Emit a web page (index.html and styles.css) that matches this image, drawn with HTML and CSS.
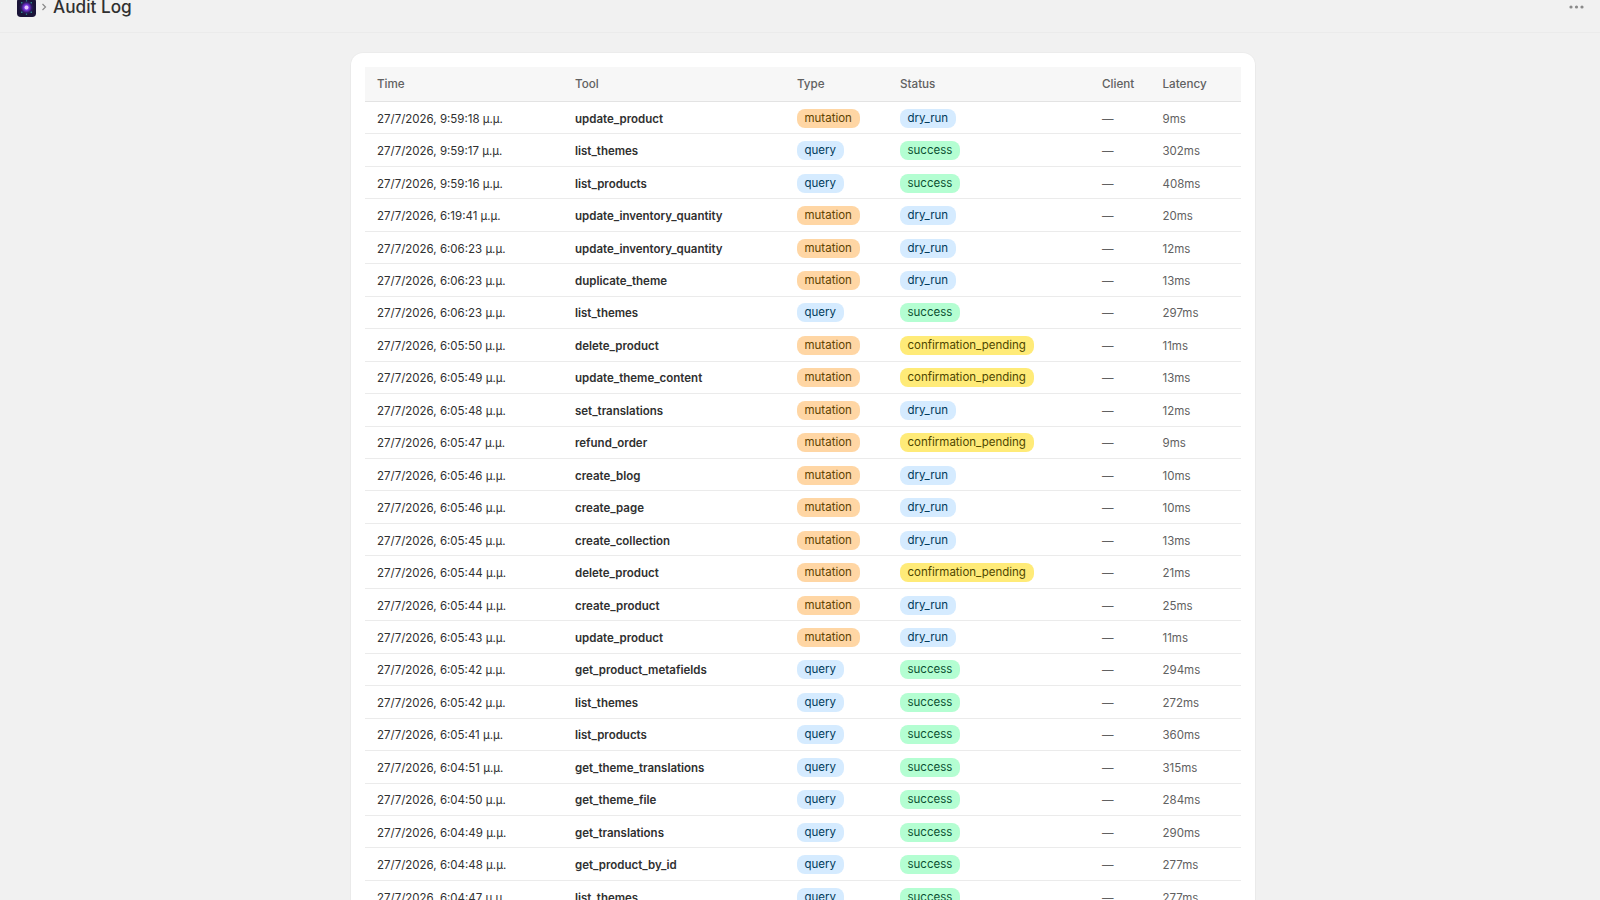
FILE: index.html
```html
<!DOCTYPE html>
<html lang="en">
<head>
  <meta charset="UTF-8">
  <title>Audit Log</title>
  <link rel="stylesheet" href="styles.css">
</head>
<body>
  <!-- page is scrolled a little in the reference, so the bar starts above the fold -->
  <header class="topbar">
    <div class="crumbs">
      <svg class="app-icon" width="19" height="19" viewBox="0 0 20 20">
        <defs>
          <radialGradient id="glow">
            <stop offset="0" stop-color="#d9a6ff"/>
            <stop offset="0.35" stop-color="#7a35e0"/>
            <stop offset="0.7" stop-color="#2c1a5e"/>
            <stop offset="1" stop-color="#1a1438"/>
          </radialGradient>
        </defs>
        <rect width="20" height="20" rx="4" fill="#1a1438"/>
        <circle cx="10" cy="10" r="8" fill="url(#glow)"/>
        <circle cx="10" cy="10" r="2" fill="#e6c8ff"/>
        <g fill="#2fa39a">
          <circle cx="5" cy="5" r="0.8"/>
          <circle cx="15" cy="5" r="0.8"/>
          <circle cx="5" cy="15" r="0.8"/>
          <circle cx="15" cy="15" r="0.8"/>
          <circle cx="10" cy="3" r="0.7"/>
          <circle cx="10" cy="17" r="0.7"/>
        </g>
      </svg>
      <svg class="chevron" width="8" height="10" viewBox="0 0 8 10">
        <path d="M2.5 2l3 3-3 3" fill="none" stroke="#8a8a8a" stroke-width="1.2"/>
      </svg>
      <h1>Audit Log</h1>
    </div>
    <svg class="more" width="16" height="4" viewBox="0 0 16 4">
      <circle cx="2" cy="2" r="1.6"/>
      <circle cx="7.5" cy="2" r="1.6"/>
      <circle cx="13" cy="2" r="1.6"/>
    </svg>
  </header>

  <main class="content">
    <div class="card">
      <table class="log">
        <thead>
          <tr>
            <th class="col-time">Time</th>
            <th class="col-tool">Tool</th>
            <th class="col-type">Type</th>
            <th class="col-status">Status</th>
            <th class="col-client">Client</th>
            <th class="col-latency">Latency</th>
          </tr>
        </thead>
        <tbody>
          <tr><td>27/7/2026, 9:59:18 μ.μ.</td><td class="tool">update_product</td><td><span class="badge orange">mutation</span></td><td><span class="badge blue">dry_run</span></td><td class="dim">—</td><td class="dim">9ms</td></tr>
          <tr><td>27/7/2026, 9:59:17 μ.μ.</td><td class="tool">list_themes</td><td><span class="badge blue">query</span></td><td><span class="badge green">success</span></td><td class="dim">—</td><td class="dim">302ms</td></tr>
          <tr><td>27/7/2026, 9:59:16 μ.μ.</td><td class="tool">list_products</td><td><span class="badge blue">query</span></td><td><span class="badge green">success</span></td><td class="dim">—</td><td class="dim">408ms</td></tr>
          <tr><td>27/7/2026, 6:19:41 μ.μ.</td><td class="tool">update_inventory_quantity</td><td><span class="badge orange">mutation</span></td><td><span class="badge blue">dry_run</span></td><td class="dim">—</td><td class="dim">20ms</td></tr>
          <tr><td>27/7/2026, 6:06:23 μ.μ.</td><td class="tool">update_inventory_quantity</td><td><span class="badge orange">mutation</span></td><td><span class="badge blue">dry_run</span></td><td class="dim">—</td><td class="dim">12ms</td></tr>
          <tr><td>27/7/2026, 6:06:23 μ.μ.</td><td class="tool">duplicate_theme</td><td><span class="badge orange">mutation</span></td><td><span class="badge blue">dry_run</span></td><td class="dim">—</td><td class="dim">13ms</td></tr>
          <tr><td>27/7/2026, 6:06:23 μ.μ.</td><td class="tool">list_themes</td><td><span class="badge blue">query</span></td><td><span class="badge green">success</span></td><td class="dim">—</td><td class="dim">297ms</td></tr>
          <tr><td>27/7/2026, 6:05:50 μ.μ.</td><td class="tool">delete_product</td><td><span class="badge orange">mutation</span></td><td><span class="badge yellow">confirmation_pending</span></td><td class="dim">—</td><td class="dim">11ms</td></tr>
          <tr><td>27/7/2026, 6:05:49 μ.μ.</td><td class="tool">update_theme_content</td><td><span class="badge orange">mutation</span></td><td><span class="badge yellow">confirmation_pending</span></td><td class="dim">—</td><td class="dim">13ms</td></tr>
          <tr><td>27/7/2026, 6:05:48 μ.μ.</td><td class="tool">set_translations</td><td><span class="badge orange">mutation</span></td><td><span class="badge blue">dry_run</span></td><td class="dim">—</td><td class="dim">12ms</td></tr>
          <tr><td>27/7/2026, 6:05:47 μ.μ.</td><td class="tool">refund_order</td><td><span class="badge orange">mutation</span></td><td><span class="badge yellow">confirmation_pending</span></td><td class="dim">—</td><td class="dim">9ms</td></tr>
          <tr><td>27/7/2026, 6:05:46 μ.μ.</td><td class="tool">create_blog</td><td><span class="badge orange">mutation</span></td><td><span class="badge blue">dry_run</span></td><td class="dim">—</td><td class="dim">10ms</td></tr>
          <tr><td>27/7/2026, 6:05:46 μ.μ.</td><td class="tool">create_page</td><td><span class="badge orange">mutation</span></td><td><span class="badge blue">dry_run</span></td><td class="dim">—</td><td class="dim">10ms</td></tr>
          <tr><td>27/7/2026, 6:05:45 μ.μ.</td><td class="tool">create_collection</td><td><span class="badge orange">mutation</span></td><td><span class="badge blue">dry_run</span></td><td class="dim">—</td><td class="dim">13ms</td></tr>
          <tr><td>27/7/2026, 6:05:44 μ.μ.</td><td class="tool">delete_product</td><td><span class="badge orange">mutation</span></td><td><span class="badge yellow">confirmation_pending</span></td><td class="dim">—</td><td class="dim">21ms</td></tr>
          <tr><td>27/7/2026, 6:05:44 μ.μ.</td><td class="tool">create_product</td><td><span class="badge orange">mutation</span></td><td><span class="badge blue">dry_run</span></td><td class="dim">—</td><td class="dim">25ms</td></tr>
          <tr><td>27/7/2026, 6:05:43 μ.μ.</td><td class="tool">update_product</td><td><span class="badge orange">mutation</span></td><td><span class="badge blue">dry_run</span></td><td class="dim">—</td><td class="dim">11ms</td></tr>
          <tr><td>27/7/2026, 6:05:42 μ.μ.</td><td class="tool">get_product_metafields</td><td><span class="badge blue">query</span></td><td><span class="badge green">success</span></td><td class="dim">—</td><td class="dim">294ms</td></tr>
          <tr><td>27/7/2026, 6:05:42 μ.μ.</td><td class="tool">list_themes</td><td><span class="badge blue">query</span></td><td><span class="badge green">success</span></td><td class="dim">—</td><td class="dim">272ms</td></tr>
          <tr><td>27/7/2026, 6:05:41 μ.μ.</td><td class="tool">list_products</td><td><span class="badge blue">query</span></td><td><span class="badge green">success</span></td><td class="dim">—</td><td class="dim">360ms</td></tr>
          <tr><td>27/7/2026, 6:04:51 μ.μ.</td><td class="tool">get_theme_translations</td><td><span class="badge blue">query</span></td><td><span class="badge green">success</span></td><td class="dim">—</td><td class="dim">315ms</td></tr>
          <tr><td>27/7/2026, 6:04:50 μ.μ.</td><td class="tool">get_theme_file</td><td><span class="badge blue">query</span></td><td><span class="badge green">success</span></td><td class="dim">—</td><td class="dim">284ms</td></tr>
          <tr><td>27/7/2026, 6:04:49 μ.μ.</td><td class="tool">get_translations</td><td><span class="badge blue">query</span></td><td><span class="badge green">success</span></td><td class="dim">—</td><td class="dim">290ms</td></tr>
          <tr><td>27/7/2026, 6:04:48 μ.μ.</td><td class="tool">get_product_by_id</td><td><span class="badge blue">query</span></td><td><span class="badge green">success</span></td><td class="dim">—</td><td class="dim">277ms</td></tr>
          <tr><td>27/7/2026, 6:04:47 μ.μ.</td><td class="tool">list_themes</td><td><span class="badge blue">query</span></td><td><span class="badge green">success</span></td><td class="dim">—</td><td class="dim">277ms</td></tr>
        </tbody>
      </table>
    </div>
  </main>
</body>
</html>
```

FILE: styles.css
```css
:root {
  --bg: #f1f1f1;
  --text: #303030;
  --text-dim: #616161;
  --line: #ebebeb;
}

html, body {
  height: 100%;
  overflow: hidden;
}

body {
  margin: 0;
  background-color: var(--bg);
  color: var(--text);
  font-family: Inter, "Liberation Sans", sans-serif;
  font-size: 13px;
}

/* Top bar */
.topbar {
  display: flex;
  align-items: center;
  justify-content: space-between;
  height: 50px;
  margin-top: -18px;
  padding: 0 15px 0 17px;
  border-bottom: 1px solid #ebebeb;
}

.crumbs {
  display: flex;
  align-items: center;
  gap: 4px;
}

.app-icon {
  display: block;
}

.topbar h1 {
  margin: 0 0 0 1px;
  font-size: 17.2px;
  font-weight: 550;
  line-height: 24px;
}

.more {
  fill: #8a8a8a;
}

/* Card */
.content {
  display: flex;
  justify-content: center;
  padding: 20px 0 0 6px;
}

.card {
  width: 876px;
  padding: 14px;
  background-color: #fff;
  border-radius: 12px;
  box-shadow: 0 0 0 1px rgba(0, 0, 0, 0.02), 0 1px 1px rgba(0, 0, 0, 0.08);
}

/* Table */
.log {
  width: 100%;
  table-layout: fixed;
  border-collapse: collapse;
}

.log th,
.log td {
  padding: 7.75px 12px 4.25px;
  text-align: left;
  white-space: nowrap;
  line-height: 19.45px;
}

.log th {
  height: 34.5px;
  box-sizing: border-box;
  padding: 7px 12px 5px;
  background-color: #f7f7f7;
  border-bottom: 1px solid #e3e3e3;
  color: var(--text-dim);
  font-weight: 500;
  font-size: 11.65px;
}

.log td {
  border-bottom: 1px solid var(--line);
  font-size: 11.5px;
}

.col-time { width: 198px; }
.col-tool { width: 222px; }
.col-type { width: 103px; }
.col-status { width: 202px; }
.col-client { width: 60.5px; }

.tool {
  font-weight: 600;
}

.dim {
  color: var(--text-dim);
}

/* Badges */
.badge {
  display: inline-block;
  margin-top: -1px;
  padding: 0 8px 0 7.5px;
  border-radius: 8px;
  font-size: 11.5px;
  font-weight: 400;
  line-height: 19px;
  vertical-align: top;
}

.orange { background-color: #ffd6a4; color: #5e4200; }
.blue { background-color: #d5ebff; color: #003a5a; }
.green { background-color: #b4fed2; color: #0c5132; }
.yellow { background-color: #ffeb78; color: #4f4700; }
```
